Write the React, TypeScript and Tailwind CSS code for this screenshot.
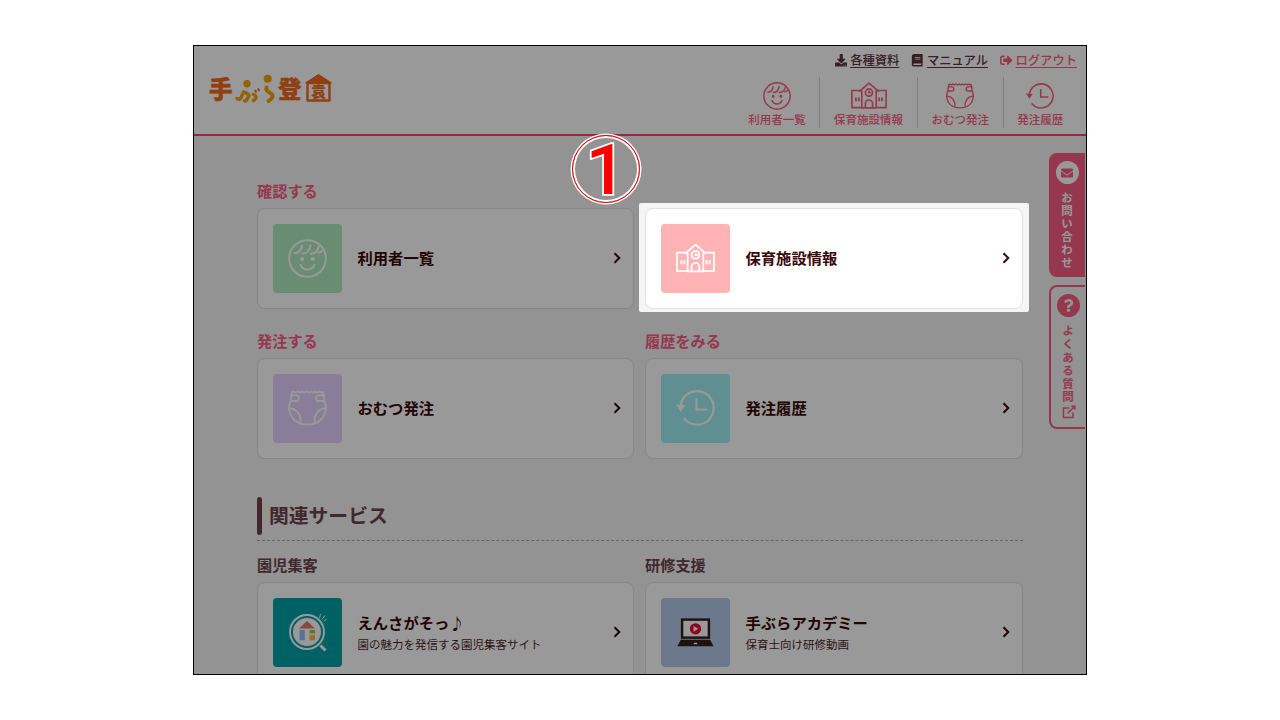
import type { ReactNode } from 'react';
import { FaBook, FaDownload, FaEnvelope, FaQuestion, FaSignOutAlt } from 'react-icons/fa';

type DrawingProps = { className?: string };

function Face({ className }: DrawingProps) {
  return (
    <svg viewBox="0 0 40 40" className={className} fill="none" stroke="currentColor" strokeWidth="2.1" strokeLinecap="round">
      <circle cx="20" cy="20" r="18.8" />
      <path d="M7 14.5c3.500 0 6.500-2.500 7.500-7.500M15 15c4 0 7-3 8-8.500M23.500 15c4 0 7-2.500 8-7M31 14c1.500 0 3-.5 4-2" />
      <path d="M13 26.500c2.500 6.500 11.500 6.500 14 0" />
      <circle cx="14.500" cy="20.500" r="1.100" fill="currentColor" />
      <circle cx="25.500" cy="20.500" r="1.100" fill="currentColor" />
    </svg>
  );
}

function School({ className }: DrawingProps) {
  return (
    <svg viewBox="0 0 40 30" className={className} fill="none" stroke="currentColor" strokeWidth="1.8" strokeLinejoin="round">
      <path d="M11 9.500H1v19h11M29 9.500h10v19H28" />
      <path d="M9 10.800 20 1.200 31 10.800M12 9.500v19.300h16V9.500" />
      <circle cx="20" cy="11.700" r="4" />
      <path d="M20 9.500v2.500h2.500M16 28.500V24a4 4 0 0 1 8 0v4.500" />
      <path strokeWidth="2" d="M5.500 17.300v4.200M8.700 17.300v4.200M31.300 17.300v4.200M34.500 17.300v4.200" />
    </svg>
  );
}

function Diaper({ className }: DrawingProps) {
  return (
    <svg viewBox="0 0 40 37" className={className} fill="none" stroke="currentColor" strokeWidth="2" strokeLinecap="round" strokeLinejoin="round">
      <path d="M4.500 2C3 4 3 9 2.300 12.500 1.200 15 1 17 1 19c1 10 8 16.500 19 16.500S38 29 39 19c0-2-.2-4-1.300-6.500C37 9 37 4 35.500 2" />
      <path d="M4.500 2q1-1 2.300 0 1.100 1 2.200 0t2.200 0 2.200 0 2.200 0 2.200 0 2.200 0 2.200 0 2.200 0 2.200 0 2.200 0 2.200 0 2.200 0 2.300 0" />
      <path d="M3.300 5.500h5a2.900 2.900 0 0 1 0 5.800H2.800M36.700 5.500h-5a2.900 2.900 0 0 0 0 5.800h5.500" />
      <path d="M1.200 18.700C8 18.500 13.500 25 12.700 33M38.800 18.700C32 18.500 26.500 25 27.300 33" />
    </svg>
  );
}

function History({ className }: DrawingProps) {
  return (
    <svg viewBox="0 0 40 37" className={className} fill="none" stroke="currentColor" strokeWidth="2.2">
      <path d="M4.700 16C6 7 13 1.200 21.500 1.200a17.200 17.200 0 1 1-13 28.500" strokeLinecap="round" />
      <path d="m0 15 9.600.500L4.800 22.500z" fill="currentColor" stroke="none" />
      <path d="M21 8.500V20h11" />
    </svg>
  );
}

function Magnifier({ className }: DrawingProps) {
  return (
    <svg viewBox="0 0 40 40" className={className} fill="none">
      <circle cx="19" cy="20" r="17" stroke="#fff" strokeWidth="1.900" />
      <circle cx="19" cy="20" r="14" fill="#fff" />
      <path d="m11 16.500 8-7.500 8 7.500z" fill="#e37b6c" />
      <path d="M11.500 18h5.300v10.300h-5.300z" fill="#8fc1ec" />
      <path d="M21.500 18H27v3.500h-5.500z" fill="#a8c92d" />
      <path d="M21.500 23H27v5.300h-5.500z" fill="#f3bd45" />
      <path d="m32.500 33.500 5 5" stroke="#fff" strokeWidth="3" />
      <path d="M31.500 6 32.500 2M34 7.500l3-4M36 9l2.500-1.500" stroke="#fff" strokeWidth="1" />
    </svg>
  );
}

function Laptop({ className }: DrawingProps) {
  return (
    <svg viewBox="0 0 40 32" className={className}>
      <path d="M5 1h30v21H5z" fill="#351d16" />
      <path d="M7.500 3.500h25v16h-25z" fill="#fff" />
      <circle cx="20" cy="11.700" r="5.800" fill="#ee0038" />
      <path d="m18 8.700 5 3-5 3z" fill="#fff" />
      <path d="M5 23h30l3.500 6.500H1.500z" fill="#351d16" />
      <path d="M18 27.500 18.500 26h3l.5 1.500z" fill="#fff" />
    </svg>
  );
}

function External({ className }: DrawingProps) {
  return (
    <svg viewBox="0 0 14 14" className={className} fill="none" stroke="currentColor" strokeWidth="1.5">
      <path d="M7.500 3H1.500v9.500H11V7.500M5.500 8.500 11.500 2.500" />
      <path d="M8.500.5h5v5z" fill="currentColor" stroke="none" />
    </svg>
  );
}

function Logo() {
  return (
    <svg role="img" aria-label="手ぶら登園" viewBox="0 0 124 32" className="h-8 w-[124px] overflow-visible font-['Noto_Sans_CJK_JP',sans-serif] font-black">
      <g fill="#ee6a1c" stroke="#ee6a1c" strokeWidth="0.5" strokeLinejoin="round">
        <text x="0" y="25.300" fontSize="23.500">手</text>
        <text x="69" y="25.300" fontSize="23.500">登</text>
      </g>
      <g fill="none" stroke="#f5a30c" strokeWidth="3.500" strokeLinecap="round" strokeLinejoin="round">
        <path d="M28 25.500c2.500 2 4 .5 5.300-4M34.500 19c4 1 6.500 3 4.500 5.500s-1 3.500-3.500 3.500M44.500 21.500c3.500 1.500 3 4 0 6" />
        <path strokeWidth="4" d="M57.500 14.500c-1.500 4.500 4.500 4.500 6 7.500.5 2.500-1.500 4.500-4 6" />
      </g>
      <circle cx="38" cy="10.700" r="3.700" fill="#f5a30c" />
      <circle cx="58.700" cy="5.700" r="4" fill="#f5a30c" />
      <path d="m46 17 1.500 2.500M48.800 15.500l1.500 2.500" stroke="#ee6a1c" strokeWidth="1.800" />
      <path d="M97 9.800 109.500 1.800 122 9.800z" fill="#ee6a1c" stroke="#ee6a1c" strokeWidth="1.500" strokeLinejoin="round" />
      <path d="M98.500 10h22v17.500h-22z" fill="#fff" stroke="#ee6a1c" strokeWidth="2.400" strokeLinejoin="round" />
      <text x="102" y="24.300" fontSize="15" fill="#ee6a1c">袁</text>
    </svg>
  );
}

function Chevron() {
  return (
    <svg viewBox="0 0 8 12" className="mb-[2px] ml-auto h-3 w-2 shrink-0" fill="none" stroke="#3a0808" strokeWidth="2">
      <path d="m1.500 1.200 4.800 4.800-4.800 4.800" />
    </svg>
  );
}

function Card({ title, note, tile, children }: { title: string; note?: string; tile: string; children: ReactNode }) {
  return (
    <a className="flex h-[101px] items-center rounded-lg border border-[#e2e2e2] bg-white pr-3 pl-[15px]">
      <span className={`flex size-[69px] shrink-0 items-center justify-center rounded pb-px text-white ${tile}`}>{children}</span>
      <span className={note ? 'ml-[15.500px] flex flex-col' : 'mb-[3px] ml-[15.500px] flex flex-col'}>
        <span className="text-[15.300px] leading-[22px] font-bold text-[#3a0808]">{title}</span>
        {note && <span className="text-[11.500px] leading-[22px] text-[#4d1f26]">{note}</span>}
      </span>
      <Chevron />
    </a>
  );
}

function Heading({ children, tone }: { children: ReactNode; tone: string }) {
  return <h3 className={`h-[25px] text-[15.200px] leading-[15px] font-bold ${tone}`}>{children}</h3>;
}

const rose = 'text-[#fa5c85]';
const plum = 'text-[#6b434d]';

const nav = [
  { label: '利用者一覧', icon: <Face className="h-7 w-7" /> },
  { label: '保育施設情報', icon: <School className="h-[27px] w-9" /> },
  { label: 'おむつ発注', icon: <Diaper className="h-[26px] w-7" /> },
  { label: '発注履歴', icon: <History className="h-[26px] w-7" /> },
];

const links = [
  { label: '各種資料', icon: <FaDownload size={12.5} />, tone: 'text-[#5c3540]' },
  { label: 'マニュアル', icon: <FaBook size={12.5} />, tone: 'text-[#5c3540]' },
  { label: 'ログアウト', icon: <FaSignOutAlt size={12.5} />, tone: 'text-[#fa5c85]' },
];

export default function App() {
  return (
    <div className="flex h-[720px] w-[1280px] bg-white pt-[45px] pl-[193px] font-['Noto_Sans_CJK_JP',sans-serif]">
      <div className="relative h-[630px] w-[894px] overflow-hidden border border-black bg-[#f5f5f5]">
        <header className="flex h-[90px] justify-between border-b-2 border-[#f04477] bg-white">
          <div className="pt-[27px] pl-[15px]">
            <Logo />
          </div>
          <div className="flex flex-col items-end pt-[5px]">
            <div className="mr-[9px] flex h-[19px] items-center gap-3">
              {links.map((l) => (
                <a key={l.label} className={`flex items-center gap-[3px] text-[12.300px] leading-[19px] font-medium ${l.tone}`}>
                  {l.icon}
                  <span className="underline underline-offset-2">{l.label}</span>
                </a>
              ))}
            </div>
            <nav className="mt-[7px] mr-[9px] flex h-[51px] divide-x divide-[#d5d5d5]">
              {nav.map((n) => (
                <a key={n.label} className="flex flex-col items-center px-[13.700px] text-[#fa5c85]">
                  <span className="flex h-[35px] items-center pt-0.5">{n.icon}</span>
                  <span className="text-[11.500px] leading-[15px] font-medium">{n.label}</span>
                </a>
              ))}
            </nav>
          </div>
        </header>

        <main className="pt-[47px] pr-[63px] pl-[63px]">
          <div className="grid grid-cols-[377px_378px] gap-x-[11px] gap-y-6">
            <section>
              <Heading tone={rose}>確認する</Heading>
              <Card title="利用者一覧" tile="bg-[#aeebc0]">
                <Face className="size-[39px]" />
              </Card>
            </section>
            <section className="pt-[25px]">
              <Card title="保育施設情報" tile="bg-[#ffb3b5]">
                <School className="h-[30px] w-[39px]" />
              </Card>
            </section>
            <section>
              <Heading tone={rose}>発注する</Heading>
              <Card title="おむつ発注" tile="bg-[#e4d0ff]">
                <Diaper className="h-9 w-[39px]" />
              </Card>
            </section>
            <section>
              <Heading tone={rose}>履歴をみる</Heading>
              <Card title="発注履歴" tile="bg-[#a0eef4]">
                <History className="h-9 w-[39px]" />
              </Card>
            </section>
          </div>

          <div className="mt-[38px] flex h-11 items-start border-b border-dashed border-[#aaa]">
            <span className="h-[38px] w-[5px] rounded-full bg-[#6b434d]" />
            <h2 className="ml-[7px] text-[19.800px] leading-[35px] font-bold text-[#6b434d]">関連サービス</h2>
          </div>

          <div className="mt-4 grid grid-cols-[377px_378px] gap-x-[11px]">
            <section>
              <Heading tone={plum}>園児集客</Heading>
              <Card title="えんさがそっ♪" note="園の魅力を発信する園児集客サイト" tile="bg-[#00a2a8]">
                <Magnifier className="size-10" />
              </Card>
            </section>
            <section>
              <Heading tone={plum}>研修支援</Heading>
              <Card title="手ぶらアカデミー" note="保育士向け研修動画" tile="bg-[#b5caeb]">
                <Laptop className="mt-0.5 h-8 w-[39px]" />
              </Card>
            </section>
          </div>
        </main>

        <aside className="absolute top-[107px] right-px flex w-9 flex-col gap-2 text-[11.500px] leading-[18px] font-bold">
          <a className="flex h-[124px] flex-col items-center rounded-l-lg bg-[#fa5c85] pt-2 text-white">
            <span className="flex size-[23px] items-center justify-center rounded-full bg-white text-[#fa5c85]">
              <FaEnvelope size={12} />
            </span>
            <span className="mt-2 tracking-[1.500px] [writing-mode:vertical-rl]">お問い合わせ</span>
          </a>
          <a className="flex h-36 flex-col items-center rounded-l-lg border-2 border-r-0 border-[#fa5c85] pt-[7px] text-[#fa5c85]">
            <span className="flex size-[23px] items-center justify-center rounded-full bg-[#fa5c85] text-[#f5f5f5]">
              <FaQuestion size={13} />
            </span>
            <span className="mt-2 tracking-[1.700px] [writing-mode:vertical-rl]">よくある質問</span>
            <External className="mt-px ml-px size-3.5" />
          </a>
        </aside>

        <div className="absolute top-[156.500px] left-[445px] h-[109px] w-[390px] rounded-xs shadow-[0_0_0_1000px_rgba(0,0,0,0.4)]" />
      </div>

      <div className="absolute top-[133px] left-[570.500px] flex size-[71px] items-center justify-center rounded-full">
        <div className="flex size-[68px] items-center justify-center rounded-full border-[1.500px] border-[#f00] shadow-[inset_0_0_0_2px_#fff,0_0_0_1.5px_#fff]">
          <svg viewBox="0 0 60 60" className="size-[60px] overflow-visible">
            <text x="30" y="54.500" textAnchor="middle" fontFamily="Roboto, sans-serif" fontSize="71" fontWeight="500" fill="#f00" stroke="#fff" strokeWidth="3.500" paintOrder="stroke">
              1
            </text>
          </svg>
        </div>
      </div>
    </div>
  );
}
